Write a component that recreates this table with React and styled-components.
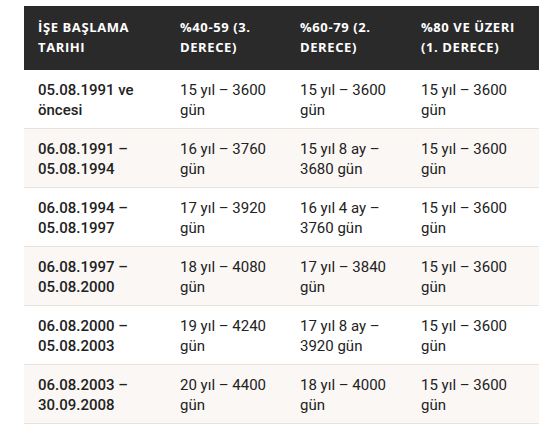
import React from 'react';
import styled, { createGlobalStyle } from 'styled-components';

const GlobalStyle = createGlobalStyle`
  html, body {
    margin: 0;
    padding: 0;
    background: #ffffff;
  }
  body {
    padding: 6px 0 0 24px;
    font-family: Roboto, "Liberation Sans", sans-serif;
  }
`;

const rows = [
  ['05.08.1991 ve öncesi', '15 yıl – 3600 gün', '15 yıl – 3600 gün', '15 yıl – 3600 gün'],
  ['06.08.1991 – 05.08.1994', '16 yıl – 3760 gün', '15 yıl 8 ay – 3680 gün', '15 yıl – 3600 gün'],
  ['06.08.1994 – 05.08.1997', '17 yıl – 3920 gün', '16 yıl 4 ay – 3760 gün', '15 yıl – 3600 gün'],
  ['06.08.1997 – 05.08.2000', '18 yıl – 4080 gün', '17 yıl – 3840 gün', '15 yıl – 3600 gün'],
  ['06.08.2000 – 05.08.2003', '19 yıl – 4240 gün', '17 yıl 8 ay – 3920 gün', '15 yıl – 3600 gün'],
  ['06.08.2003 – 30.09.2008', '20 yıl – 4400 gün', '18 yıl – 4000 gün', '15 yıl – 3600 gün'],
];

const headers = ['İşe Başlama Tarihi', '%40-59 (3. Derece)', '%60-79 (2. Derece)', '%80 ve Üzeri (1. Derece)'];
const widths = [142, 120, 121, 132];

export default function App() {
  return (
    <>
      <GlobalStyle />
      <Table>
        <colgroup>
          {widths.map((w, i) => (
            <col key={i} style={{ width: w }} />
          ))}
        </colgroup>
        <thead>
          <tr>
            {headers.map((h) => (
              <HeadCell key={h}>{h}</HeadCell>
            ))}
          </tr>
        </thead>
        <tbody>
          {rows.map((r, i) => (
            <Row key={i} $even={i % 2 === 1}>
              {r.map((c, j) => (
                <Cell key={j} $first={j === 0}>{c}</Cell>
              ))}
            </Row>
          ))}
        </tbody>
      </Table>
    </>
  );
}

const Table = styled.table`
  width: 515px;
  border-collapse: collapse;
  table-layout: fixed;
`;

const HeadCell = styled.th`
  background: #2a2a2a;
  color: #ffffff;
  text-align: left;
  vertical-align: top;
  padding: 11px 14px 13px;
  font-family: "Open Sans", "DejaVu Sans", sans-serif;
  font-weight: 700;
  font-size: 13px;
  line-height: 20px;
  letter-spacing: 0.6px;
  text-transform: uppercase;
`;

const Row = styled.tr`
  background: ${(p) => (p.$even ? '#faf7f4' : '#ffffff')};
  border-bottom: 1px solid #e9e3db;
`;

const Cell = styled.td`
  vertical-align: top;
  padding: 10px 14px 8px;
  font-size: 15px;
  line-height: 20px;
  color: #222222;
  font-weight: ${(p) => (p.$first ? 500 : 400)};
`;
